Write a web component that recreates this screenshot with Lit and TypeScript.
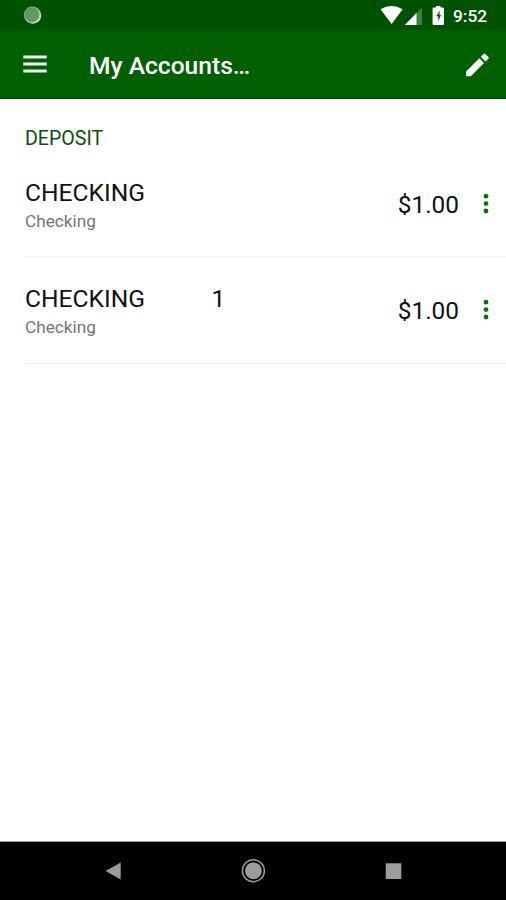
import { LitElement, html, css } from "lit";
import { customElement, property } from "lit/decorators.js";

@customElement("status-bar")
class StatusBar extends LitElement {
  static styles = css`
    :host { display: flex; height: 30px; background: #005200; color: #fff; flex: none; }
    svg { display: block; flex: none; }
    .left { margin-left: 22px; flex: 1; }
    .time { font-size: 17.3px; font-weight: 500; line-height: 32px; width: 53px; }
  `;
  render() {
    return html`
      <svg class="left" width="22" height="30" viewBox="0 0 22 30" preserveAspectRatio="xMinYMin meet">
        <circle cx="10.8" cy="15.4" r="8.4" fill="#dcebdc" />
        <circle cx="9.8" cy="14.5" r="7.7" fill="#619961" />
        <circle cx="10.2" cy="14.8" r="8" fill="none" stroke="#8db58d" stroke-width=".6" />
      </svg>
      <svg width="73" height="30" viewBox="380 0 73 30" fill="#fff">
        <path d="M380.5 9.3Q391.5 2.5 402.7 9.3L391.6 24Z" />
        <path d="M422 7.5V25H404.8Z" fill="#3f7e3f" />
        <path d="M416.5 13.1V25H404.8Z" />
        <path d="M436 6h4.600v1.600h2.200q1.200 0 1.200 1.200v15q0 1.200-1.200 1.200h-9q-1.200 0-1.200-1.200v-15q0-1.200 1.200-1.200h2.200z" />
        <path d="M440 10.500L436.200 16.300H438.300V21.300L441 15H439.300Z" fill="#005200" />
      </svg>
      <span class="time">9:52</span>
    `;
  }
}

@customElement("app-bar")
class AppBar extends LitElement {
  static styles = css`
    :host { display: flex; box-sizing: border-box; height: 69px; background: #005f00; border-bottom: 1px solid #064006; color: #fff; align-items: center; flex: none; }
    svg { display: block; flex: none; }
    .menu { margin-left: 23px; }
    .title { margin: 4px 0 0 42px; flex: 1; font-size: 24.6px; font-weight: 500; line-height: 30px; }
    .edit { margin-right: 14px; }
  `;
  render() {
    return html`
      <svg class="menu" width="24" height="68" viewBox="0 0 24 68" fill="#f0f6f0">
        <path d="M.3 25.500h23.400v3H.3zM.3 32.500h23.400v3H.3zM.3 39.500h23.400v3H.3z" />
      </svg>
      <span class="title">My Accounts…</span>
      <svg class="edit" width="30" height="68" viewBox="462 30 30 68" fill="#fff">
        <path d="M466.100 71.500V76.200H470.800L484 62.900L479.300 58.200Z" />
        <path d="M480.800 56.700L483.600 53.900Q484.500 53 485.400 53.900L488.400 56.900Q489.200 57.800 488.400 58.700L485.500 61.500Z" />
      </svg>
    `;
  }
}

@customElement("account-row")
class AccountRow extends LitElement {
  @property() name = "";
  @property() suffix = "";
  @property() kind = "";
  @property() amount = "";
  static styles = css`
    :host { display: flex; box-sizing: border-box; height: 106px; margin-left: 25px; border-bottom: 1px solid #f0f0f0; color: #111; }
    :host(:last-of-type) { height: 107px; }
    .info { flex: 1; padding-top: 28px; }
    .name { display: flex; font-size: 24.6px; line-height: 28px; height: 28px; }
    .name span { width: 186.5px; }
    .kind { font-size: 17.2px; line-height: 20px; margin-top: 4px; color: #757575; }
    .amount { font-size: 24.4px; line-height: 28px; margin-top: 40px; }
    svg { display: block; flex: none; margin: 0 14px 0 21px; }
  `;
  render() {
    return html`
      <div class="info">
        <div class="name"><span>${this.name}</span>${this.suffix}</div>
        <div class="kind">${this.kind}</div>
      </div>
      <div class="amount">${this.amount}</div>
      <svg width="12" height="105" viewBox="0 0 12 105" fill="#0a700a">
        <circle cx="6" cy="45.200" r="2.400" /><circle cx="6" cy="52.600" r="2.400" /><circle cx="6" cy="60" r="2.400" />
      </svg>
    `;
  }
}

@customElement("nav-bar")
class NavBar extends LitElement {
  static styles = css`
    :host { display: block; box-sizing: border-box; height: 59px; background: #000; border-top: 1px solid #999; flex: none; }
    svg { display: block; }
  `;
  render() {
    return html`
      <svg width="506" height="58" viewBox="0 842 506 58" fill="#9c9c9c">
        <path d="M105.700 871L120.700 862.500V879.500Z" />
        <circle cx="253.400" cy="870.800" r="8.400" />
        <circle cx="253.400" cy="870.800" r="11" fill="none" stroke="#9c9c9c" stroke-width="1.500" />
        <path d="M385.700 863.300H401.300V879H385.700Z" />
      </svg>
    `;
  }
}

@customElement("app-root")
class AppRoot extends LitElement {
  static styles = css`
    :host { display: flex; flex-direction: column; width: 506px; height: 900px; background: #fff; font-family: Roboto, sans-serif; overflow: hidden; }
    main { flex: 1; }
    .section { margin: 28px 0 0 25px; height: 24px; line-height: 24px; font-size: 19.6px; color: #0b4f0b; }
  `;
  render() {
    return html`
      <status-bar></status-bar>
      <app-bar></app-bar>
      <main>
        <div class="section">DEPOSIT</div>
        <account-row name="CHECKING" kind="Checking" amount="$1.00"></account-row>
        <account-row name="CHECKING" suffix="1" kind="Checking" amount="$1.00"></account-row>
      </main>
      <nav-bar></nav-bar>
    `;
  }
}
